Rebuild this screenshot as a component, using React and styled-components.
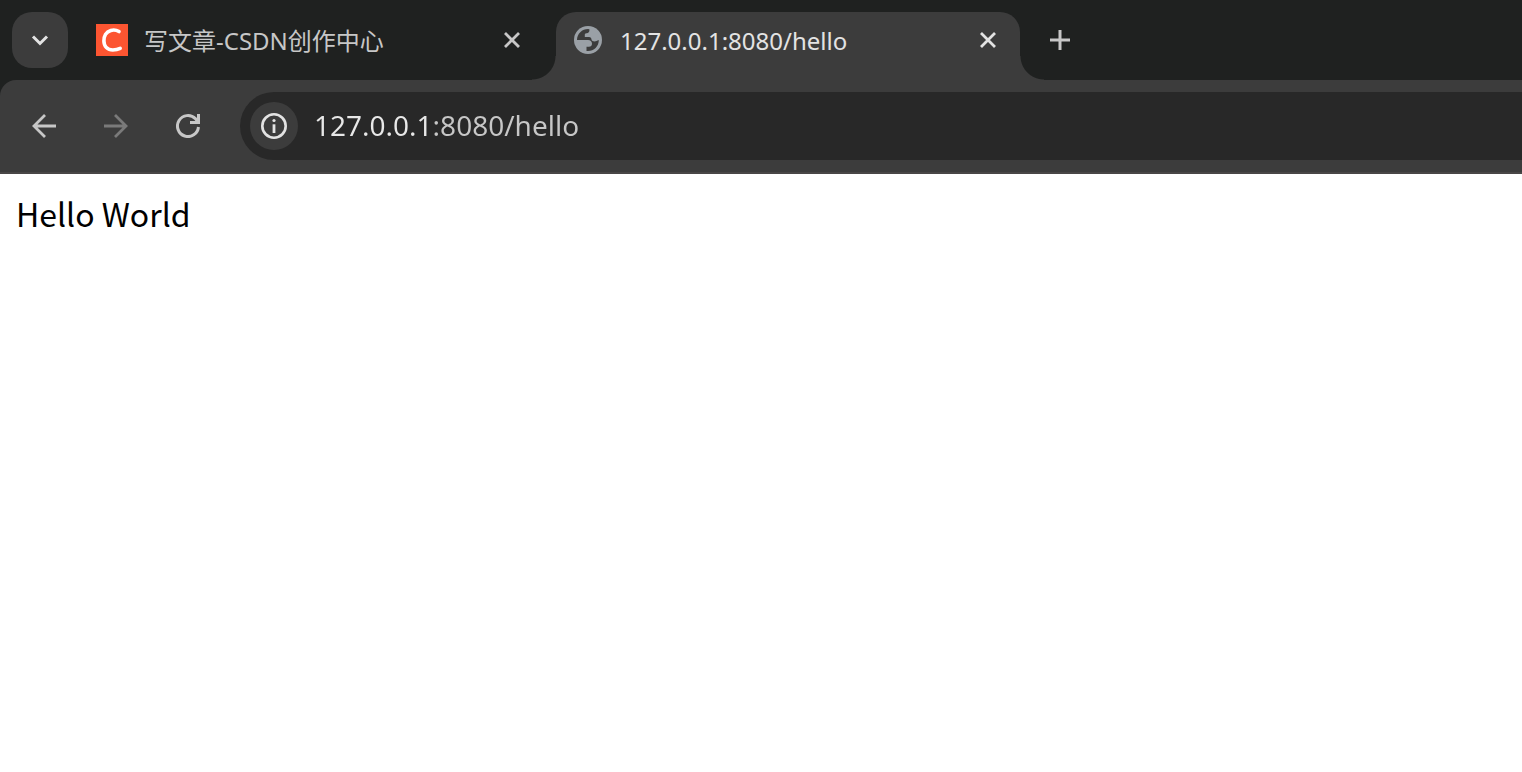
import React from "react";
import styled, { createGlobalStyle } from "styled-components";

const GlobalStyle = createGlobalStyle`
  * {
    box-sizing: border-box;
  }

  body {
    margin: 0;
    background-color: white;
    font-family: "Noto Sans", "Noto Sans CJK SC", sans-serif;
  }

  button {
    padding: 0;
    border: none;
    background: none;
    color: inherit;
    font: inherit;
    cursor: pointer;
  }

  svg {
    display: block;
    flex-shrink: 0;
  }
`

const TabStrip = styled.header`
  display: flex;
  height: 80px;
  padding: 12px 12px 0;
  background-color: #1f2120;
`

const TabSearchButton = styled.button`
  display: grid;
  place-items: center;
  flex-shrink: 0;
  width: 56px;
  height: 56px;
  margin-right: 12px;
  border-radius: 20px;
  background-color: #3c3c3c;
  color: #e3e3e3;
`

const Tabs = styled.div`
  display: flex;
  flex: 0 1 940px;
  gap: 12px;
  min-width: 0;
`

const TabItem = styled.div`
  position: relative;
  display: flex;
  flex: 1 1 0;
  align-items: flex-start;
  min-width: 0;
  padding: 0 16px;
  border-radius: 20px 20px 0 0;
  background-color: ${(props) => (props.$active ? "#3c3c3c" : "transparent")};
  color: ${(props) => (props.$active ? "#e3e3e3" : "#c7c7c7")};

  /* curved feet that join the active tab to the toolbar */
  &::before,
  &::after {
    content: "";
    display: ${(props) => (props.$active ? "block" : "none")};
    position: absolute;
    bottom: 0;
    width: 24px;
    height: 24px;
  }

  &::before {
    right: 100%;
    background: radial-gradient(circle at 0 0, transparent 23px, #3c3c3c 24px);
  }

  &::after {
    left: 100%;
    background: radial-gradient(circle at 100% 0, transparent 23px, #3c3c3c 24px);
  }
`

const TabLabel = styled.button`
  display: flex;
  flex: 1;
  align-items: center;
  gap: 16px;
  min-width: 0;
  height: 56px;
  font-size: 24px;
  line-height: 36px;
  text-align: left;
`

const TabTitle = styled.span`
  overflow: hidden;
  padding-top: 2px;
  white-space: nowrap;
`

const IconButton = styled.button`
  display: grid;
  place-items: center;
  flex-shrink: 0;
  width: ${(props) => props.$size || 56}px;
  height: 56px;
  border-radius: 50%;
  color: #c7c7c7;

  &:disabled {
    color: #7a7a7a;
    cursor: default;
  }
`

const CloseButton = styled(IconButton)`
  color: inherit;
`

const NewTabButton = styled(IconButton)`
  margin-left: 12px;
`

const ToolbarBack = styled.div`
  background-color: #1f2120;
`

const Toolbar = styled.nav`
  display: flex;
  align-items: center;
  gap: 16px;
  padding: 12px 0 12px 16px;
  border-bottom: 2px solid #494646;
  border-radius: 16px 0 0 0;
  background-color: #3c3c3c;
`

const AddressBar = styled.div`
  display: flex;
  flex: 1;
  align-items: center;
  gap: 16px;
  min-width: 0;
  height: 68px;
  margin-left: 8px;
  padding-left: 10px;
  border-radius: 34px 0 0 34px;
  background-color: #282828;
`

const SiteInfoButton = styled.button`
  display: grid;
  place-items: center;
  flex-shrink: 0;
  width: 48px;
  height: 48px;
  border-radius: 50%;
  background-color: #3c3c3c;
  color: #e3e3e3;
`

/* host is brighter than the port and path */
const AddressInput = styled.input`
  flex: 1;
  min-width: 0;
  height: 44px;
  padding: 0 0 2px;
  border: none;
  outline: none;
  background: linear-gradient(90deg, #e8e8e8 118px, #c7c7c7 118px);
  background-clip: text;
  -webkit-background-clip: text;
  color: transparent;
  caret-color: #e8e8e8;
  font-family: "Noto Sans", sans-serif;
  font-size: 28px;
`

const Page = styled.main`
  padding: 16px;
  color: black;
  font-family: "Noto Sans CJK SC", sans-serif;
  font-size: 32px;
  line-height: 46px;
`

const ChevronIcon = () => (
  <svg width="20" height="20" viewBox="0 0 20 20" fill="none" stroke="currentColor" strokeWidth="3">
    <path d="M3 6.5l7 7 7-7" />
  </svg>
)

const CsdnIcon = () => (
  <svg width="32" height="32" viewBox="0 0 32 32" fill="none">
    <rect width="32" height="32" fill="#fc5531" />
    <path d="M23 7.600C20.500 6 17.500 5.600 14.800 6.400C10 7.800 7.800 12.500 7.900 17C8 22.500 11.500 26 16.800 26C19.500 26 22 25.500 24.200 24.400" stroke="white" strokeWidth="3.600" strokeLinecap="round" />
  </svg>
)

const GlobeIcon = () => (
  <svg width="32" height="32" viewBox="0 0 32 32">
    <circle cx="16" cy="16" r="14" fill="#9aa0a6" />
    <path d="M5 16C5 9.800 10 5 16.200 5L17.500 5.500C17.500 8 16.500 9.300 14.500 9.300C13 9.300 12.800 10 12.800 11.200V13H17C18.800 13 19.300 14 19.500 15.500C19.800 17 21 17.400 22.500 17.400C24 17.400 25 16.500 26.800 16C26.800 22.500 22 27 16 27H14.500V22.800H17C18.800 22.800 20 21.600 20 19.800C20 17.500 18.500 16 16 16Z" fill="#3c3c3c" />
  </svg>
)

const CloseIcon = () => (
  <svg width="16" height="16" viewBox="0 0 16 16" fill="none" stroke="currentColor" strokeWidth="2.800">
    <path d="M1 1l14 14M15 1L1 15" />
  </svg>
)

const PlusIcon = () => (
  <svg width="20" height="20" viewBox="0 0 20 20" fill="none" stroke="currentColor" strokeWidth="3">
    <path d="M10 0v20M0 10h20" />
  </svg>
)

const ArrowIcon = ({ flip }) => (
  <svg width="24" height="24" viewBox="0 0 24 24" fill="none" stroke="currentColor" strokeWidth="2.800">
    <path d={flip ? "M0 12h22M11 1l11 11-11 11" : "M24 12H2M13 1L2 12l11 11"} />
  </svg>
)

const ReloadIcon = () => (
  <svg width="24" height="24" viewBox="0 0 24 24" fill="none" stroke="currentColor" strokeWidth="3">
    <path d="M22.450 13A10.500 10.500 0 1 1 19.400 4.600L22 8" />
    <path d="M22.500 0V8.500H14" />
  </svg>
)

const InfoIcon = () => (
  <svg width="28" height="28" viewBox="0 0 28 28" fill="none">
    <circle cx="14" cy="14" r="11.700" stroke="currentColor" strokeWidth="2.600" />
    <circle cx="14" cy="8.500" r="1.600" fill="currentColor" />
    <path d="M14 12.300v8.700" stroke="currentColor" strokeWidth="2.800" />
  </svg>
)

const tabs = [
  { title: "写文章-CSDN创作中心", icon: <CsdnIcon /> },
  { title: "127.0.0.1:8080/hello", icon: <GlobeIcon /> }
]

class App extends React.Component {

  state = {
    activeTab: 1,
    address: "127.0.0.1:8080/hello"
  }

  selectTab = (index) => {
    this.setState({ activeTab: index })
  }

  updateAddress = (event) => {
    this.setState({ address: event.target.value })
  }

  render() {
    return (
      <>
        <GlobalStyle />
        <TabStrip>
          <TabSearchButton aria-label="Search tabs"><ChevronIcon /></TabSearchButton>
          <Tabs>
            {tabs.map((tab, index) => (
              <TabItem key={tab.title} $active={index === this.state.activeTab}>
                <TabLabel onClick={() => this.selectTab(index)}>
                  {tab.icon}
                  <TabTitle>{tab.title}</TabTitle>
                </TabLabel>
                <CloseButton $size={32} aria-label="Close tab"><CloseIcon /></CloseButton>
              </TabItem>
            ))}
          </Tabs>
          <NewTabButton aria-label="New tab"><PlusIcon /></NewTabButton>
        </TabStrip>
        <ToolbarBack>
          <Toolbar>
            <IconButton aria-label="Back"><ArrowIcon /></IconButton>
            <IconButton aria-label="Forward" disabled><ArrowIcon flip /></IconButton>
            <IconButton aria-label="Reload"><ReloadIcon /></IconButton>
            <AddressBar>
              <SiteInfoButton aria-label="Site information"><InfoIcon /></SiteInfoButton>
              <AddressInput
                type="text"
                aria-label="Address"
                spellCheck={false}
                value={this.state.address}
                onChange={this.updateAddress}
              />
            </AddressBar>
          </Toolbar>
        </ToolbarBack>
        <Page>Hello World</Page>
      </>
    )
  }
}

export default App
